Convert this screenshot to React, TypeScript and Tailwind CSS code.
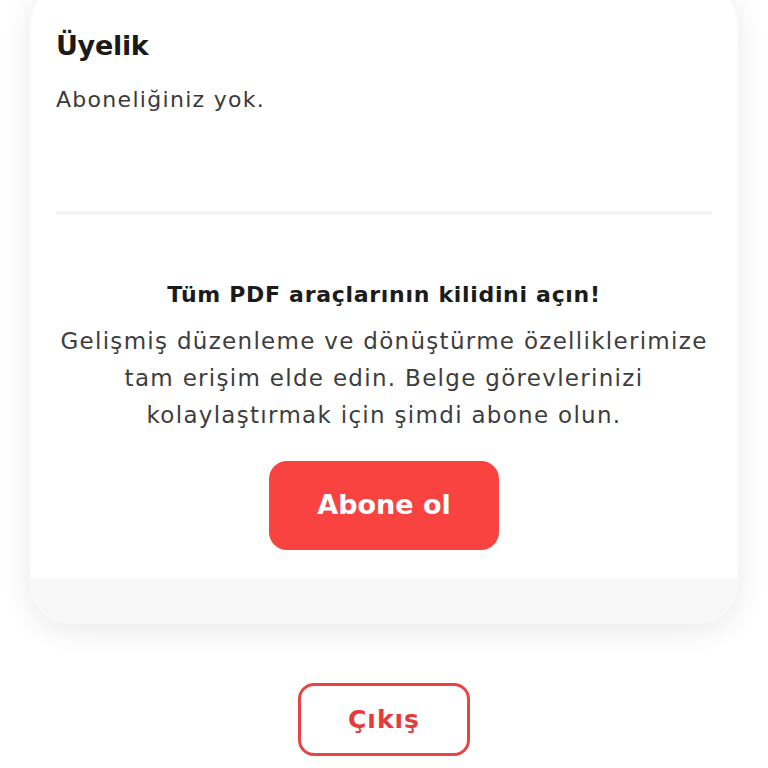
const font = { fontFamily: '"DejaVu Sans", "Noto Sans", sans-serif' };

export default function App() {
  return (
    <div className="min-h-screen bg-white px-[30px] pb-10" style={font}>
      {/* Membership card */}
      <div className="-mt-[15px] overflow-hidden rounded-[40px] bg-white shadow-[0_6px_30px_rgba(0,0,0,0.09)]">
        <div className="px-[26px] pt-[41px] pb-[28px]">
          <h2 className="text-[27px] font-bold leading-[40px] tracking-[-0.3px] text-[#1b1b1b]">Üyelik</h2>
          <p className="mt-[19px] text-[22px] leading-[30px] tracking-[1.3px] text-[#3a3a3a]">Aboneliğiniz yok.</p>
          <div className="mt-[96px] h-[4px] rounded-full bg-[#f3f3f3]" />

          <div className="mt-[65px] flex flex-col items-center text-center">
            <h3 className="text-[22px] font-bold leading-[30px] tracking-[0.7px] text-[#1b1b1b]">
              Tüm PDF araçlarının kilidini açın!
            </h3>
            <p className="mt-[13px] text-[23px] leading-[37px] tracking-[1.3px] text-[#3d3d3d]">
              Gelişmiş düzenleme ve dönüştürme özelliklerimize
              <br />
              tam erişim elde edin. Belge görevlerinizi
              <br />
              kolaylaştırmak için şimdi abone olun.
            </p>
            <button className="mt-[27px] flex h-[89px] w-[230px] items-center justify-center rounded-[18px] bg-[#f94340] text-[27px] font-bold text-white">
              Abone ol
            </button>
          </div>
        </div>
        <div className="h-[46px] bg-[#f8f8f8]" />
      </div>

      {/* Logout */}
      <div className="mt-[59px] flex justify-center">
        <button className="flex h-[73px] w-[172px] items-center justify-center rounded-[16px] border-[3px] border-[#e94343] bg-white text-[25px] font-bold tracking-[1px] text-[#e23c3c]">
          Çıkış
        </button>
      </div>
    </div>
  );
}
